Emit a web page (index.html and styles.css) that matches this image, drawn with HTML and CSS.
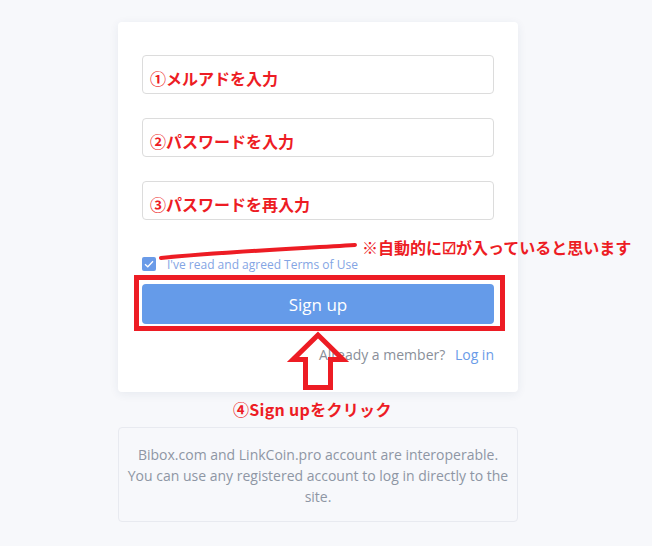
FILE: index.html
```html
<!DOCTYPE html>
<html lang="ja">
<head>
    <meta charset="UTF-8">
    <meta name="viewport" content="width=device-width, initial-scale=1.0">
    <title>Sign up</title>
    <link rel="stylesheet" href="styles.css">
</head>
<body>
    <div class="wrap">
        <div class="card">
            <div class="field"><span class="note">①メルアドを入力</span></div>
            <div class="field"><span class="note">②パスワードを入力</span></div>
            <div class="field"><span class="note">③パスワードを再入力</span></div>

            <label class="agree">
                <span class="check">
                    <svg width="10" height="8" viewBox="0 0 10 8"><path d="M1 4.2 L3.8 6.8 L9 1.2" fill="none" stroke="#fff" stroke-width="1.3"/></svg>
                </span>
                <span>I've read and agreed Terms of Use</span>
            </label>

            <button class="button">Sign up</button>

            <p class="member">Already a member? <a href="#">Log in</a></p>
        </div>

        <div class="info">
            Bibox.com and LinkCoin.pro account are interoperable. You can use any registered account to log in directly to the site.
        </div>
    </div>

    <!-- annotations drawn on top of the screenshot -->
    <svg class="mark-line" width="652" height="546" viewBox="0 0 652 546">
        <path d="M161 258 C 220 252, 290 249, 355 245" fill="none" stroke="#ed1c24" stroke-width="4" stroke-linecap="round"/>
        <polygon points="318,335 343,359.5 330.5,359.5 330.5,387.5 305.5,387.5 305.5,359.5 293,359.5" fill="none" stroke="#ed1c24" stroke-width="5"/>
    </svg>
    <div class="mark-box"></div>
    <div class="mark-text mark-auto">※自動的に☑が入っていると思います</div>
    <div class="mark-text mark-click">④Sign upをクリック</div>
</body>
</html>
```

FILE: styles.css
```css
body {
    font-family: "Open Sans", "Noto Sans", sans-serif;
    margin: 0;
    padding: 0;
    background-color: #f7f8fb;
    position: relative;
    height: 546px;
    overflow: hidden;
}
.wrap {
    width: 400px;
    margin-left: 118px;
    padding-top: 22px;
}
.card {
    background: white;
    border-radius: 4px;
    box-shadow: 0px 2px 10px rgba(40, 60, 100, 0.08);
    padding: 33px 24px 0 24px;
    height: 370px;
    box-sizing: border-box;
}
.field {
    height: 39px;
    box-sizing: border-box;
    border: 1px solid #dcdcdc;
    border-radius: 4px;
    margin-bottom: 24px;
    padding: 12px 0 0 7px;
}
.field:nth-child(3) {
    margin-bottom: 37px;
}
.note {
    color: #ed1c24;
    font-family: "Noto Sans CJK JP", sans-serif;
    font-weight: bold;
    font-size: 16px;
    line-height: 20px;
}
.agree {
    display: flex;
    align-items: center;
    gap: 11px;
    height: 14px;
    font-size: 12px;
    color: #84a5e4;
}
.check {
    display: flex;
    align-items: center;
    justify-content: center;
    width: 14px;
    height: 14px;
    border-radius: 2px;
    background-color: #6a9be8;
}
.button {
    display: block;
    width: 100%;
    height: 40px;
    margin-top: 13px;
    background-color: #659be9;
    color: white;
    border: none;
    border-radius: 4px;
    font-family: "Open Sans", sans-serif;
    font-size: 17px;
    cursor: pointer;
}
.member {
    margin: 20px 0 0 0;
    text-align: right;
    font-size: 14px;
    line-height: 22px;
    color: #8a8f99;
}
.member a {
    color: #6a9be8;
    text-decoration: none;
    margin-left: 6px;
}
.info {
    margin-top: 35px;
    height: 95px;
    box-sizing: border-box;
    border: 1px solid #e8eaf0;
    border-radius: 4px;
    padding: 16px 8px 0 8px;
    text-align: center;
    font-size: 14px;
    line-height: 21px;
    color: #8e96a4;
}
.mark-line {
    position: absolute;
    left: 0;
    top: 0;
}
.mark-box {
    position: absolute;
    left: 134px;
    top: 275px;
    width: 371px;
    height: 56px;
    box-sizing: border-box;
    border: 5px solid #ed1c24;
}
.mark-text {
    position: absolute;
    color: #ed1c24;
    font-family: "Noto Sans CJK JP", sans-serif;
    font-weight: bold;
    font-size: 16px;
    line-height: 20px;
    white-space: nowrap;
}
.mark-auto {
    left: 362px;
    top: 237px;
}
.mark-click {
    left: 233px;
    top: 399px;
    letter-spacing: 0.3px;
}
```
